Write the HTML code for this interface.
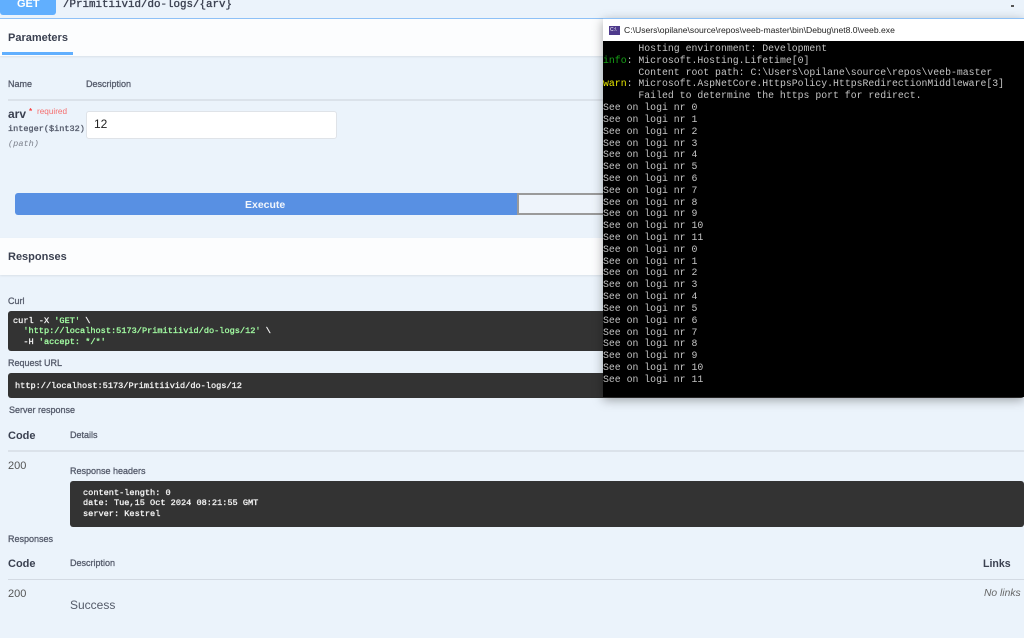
<!DOCTYPE html>
<html>
<head>
<meta charset="utf-8">
<style>
html,body{margin:0;padding:0}
body{width:1024px;height:638px;overflow:hidden;background:#ebf3fb;position:relative;font-family:"Liberation Sans",sans-serif;color:#3b4151}
.a{position:absolute;white-space:pre;line-height:1}
.b{font-weight:700}
.l{font-size:9px;color:#555b6b;-webkit-text-stroke:.3px #555b6b}
.m{font-family:"Liberation Mono",monospace}
.w{font-size:8.6px;line-height:10.4px;color:#f4f4f4;-webkit-text-stroke:.3px #f4f4f4;margin:0}
.box{position:absolute;background:#333;border-radius:3px}
.hr{position:absolute;height:1px;background:#d6dee7}
#con{position:absolute;left:603px;top:41px;width:421px;height:356px;background:#000}
#con pre{position:absolute;left:0;top:2px;margin:0;font:9.83px/11.82px "Liberation Mono",monospace;color:#c4c4c4}
</style>
</head>
<body>
<div style="position:absolute;left:0;top:18px;width:1024px;height:1px;background:#8fc2f8"></div>
<div style="position:absolute;left:0;top:-10px;width:56px;height:25px;background:#61affe;border-radius:3px"></div>
<div class="a b" style="left:17px;top:-1px;font-size:11px;color:#fff">GET</div>
<div class="a m" style="left:63px;top:0px;font-size:10.83px;color:#3b4151;-webkit-text-stroke:.35px #3b4151">/Primitiivid/do-logs/{arv}</div>
<div style="position:absolute;left:1011px;top:5px;width:3px;height:2px;background:#555"></div>
<div style="position:absolute;left:0;top:19px;width:1024px;height:37px;background:#fcfdfe;box-shadow:0 1px 2px rgba(0,0,0,.08)"></div>
<div class="a b" style="left:8px;top:33px;font-size:11px">Parameters</div>
<div style="position:absolute;left:2px;top:52px;width:71px;height:3px;background:#61affe"></div>
<div class="a l" style="left:8px;top:80px">Name</div>
<div class="a l" style="left:86px;top:80px">Description</div>
<div class="hr" style="left:8px;top:99px;width:1016px;height:2px;background:#dbe2ea"></div>
<div class="a b" style="left:8px;top:108px;font-size:12px">arv</div>
<div class="a b" style="left:29px;top:108px;font-size:8px;color:#f93e3e">*</div>
<div class="a" style="left:37px;top:108px;font-size:8.2px;color:#f56f6f">required</div>
<div class="a m" style="left:8px;top:125px;font-size:8.55px;color:#555b6b;-webkit-text-stroke:.3px #555b6b">integer($int32)</div>
<div class="a m" style="left:8px;top:140px;font-size:8.6px;font-style:italic;color:#7b7f8a">(path)</div>
<div style="position:absolute;left:86px;top:111px;width:249px;height:26px;background:#fff;border:1px solid #dfe3e8;border-radius:3px"></div>
<div class="a" style="left:94px;top:118px;font-size:12px;color:#222">12</div>
<div style="position:absolute;left:15px;top:193px;width:502px;height:22px;background:#5890e3;border-radius:3px 0 0 3px"></div>
<div class="a b" style="left:245px;top:200px;font-size:10.5px;color:#f2f6fc">Execute</div>
<div style="position:absolute;left:517px;top:193px;width:90px;height:18px;border:2px solid #9a9a9a;background:#eef4fb"></div>
<div style="position:absolute;left:0;top:238px;width:1024px;height:37px;background:#fcfdfe;box-shadow:0 1px 2px rgba(0,0,0,.08)"></div>
<div class="a b" style="left:8px;top:252px;font-size:11px">Responses</div>
<div class="a l" style="left:8px;top:297px">Curl</div>
<div class="box" style="left:8px;top:311px;width:1016px;height:40px"></div>
<pre class="a m w" style="left:13px;top:316px">curl -X <span style="color:#a2fca2;-webkit-text-stroke-color:#a2fca2">'GET'</span> \
  <span style="color:#a2fca2;-webkit-text-stroke-color:#a2fca2">'http://localhost:5173/Primitiivid/do-logs/12'</span> \
  -H <span style="color:#a2fca2;-webkit-text-stroke-color:#a2fca2">'accept: */*'</span></pre>
<div class="a l" style="left:8px;top:359px">Request URL</div>
<div class="box" style="left:8px;top:373px;width:1016px;height:25px"></div>
<div class="a m w" style="left:15px;top:381px">http://localhost:5173/Primitiivid/do-logs/12</div>
<div class="a l" style="left:9px;top:406px">Server response</div>
<div class="a b" style="left:8px;top:431px;font-size:11px">Code</div>
<div class="a l" style="left:70px;top:431px">Details</div>
<div class="hr" style="left:8px;top:450px;width:1016px;height:2px;background:#dbe2ea"></div>
<div class="a" style="left:8px;top:461px;font-size:11px;color:#555">200</div>
<div class="a l" style="left:70px;top:467px">Response headers</div>
<div class="box" style="left:70px;top:481px;width:954px;height:46px"></div>
<pre class="a m w" style="left:83px;top:488px">content-length: 0
date: Tue,15 Oct 2024 08:21:55 GMT
server: Kestrel</pre>
<div class="a l" style="left:8px;top:535px">Responses</div>
<div class="a b" style="left:8px;top:559px;font-size:11px">Code</div>
<div class="a l" style="left:70px;top:559px">Description</div>
<div class="a b" style="left:983px;top:559px;font-size:10.6px">Links</div>
<div class="hr" style="left:8px;top:579px;width:1016px;background:#d3dae3"></div>
<div class="a" style="left:8px;top:589px;font-size:11px;color:#555">200</div>
<div class="a" style="left:70px;top:599px;font-size:12px;color:#555b69">Success</div>
<div class="a" style="left:984px;top:589px;font-size:10.3px;font-style:italic;color:#666">No links</div>
<div style="position:absolute;left:603px;top:18px;width:421px;height:379px;box-shadow:0 3px 10px rgba(0,0,0,.35)"></div>
<div style="position:absolute;left:603px;top:19px;width:421px;height:23px;background:#fff"></div>
<div style="position:absolute;left:609px;top:26px;width:11px;height:9px;background:#4e3a8c"></div>
<div class="a" style="left:610px;top:28px;font-size:5px;color:#fff">C:\</div>
<div class="a" style="left:624px;top:26px;font-size:8.6px;color:#222">C:\Users\opilane\source\repos\veeb-master\bin\Debug\net8.0\veeb.exe</div>
<div id="con"><pre>      Hosting environment: Development
<span style="color:#16a016">info</span>: Microsoft.Hosting.Lifetime[0]
      Content root path: C:\Users\opilane\source\repos\veeb-master
<span style="color:#e8e800">warn</span>: Microsoft.AspNetCore.HttpsPolicy.HttpsRedirectionMiddleware[3]
      Failed to determine the https port for redirect.
See on logi nr 0
See on logi nr 1
See on logi nr 2
See on logi nr 3
See on logi nr 4
See on logi nr 5
See on logi nr 6
See on logi nr 7
See on logi nr 8
See on logi nr 9
See on logi nr 10
See on logi nr 11
See on logi nr 0
See on logi nr 1
See on logi nr 2
See on logi nr 3
See on logi nr 4
See on logi nr 5
See on logi nr 6
See on logi nr 7
See on logi nr 8
See on logi nr 9
See on logi nr 10
See on logi nr 11</pre></div>
</body>
</html>
